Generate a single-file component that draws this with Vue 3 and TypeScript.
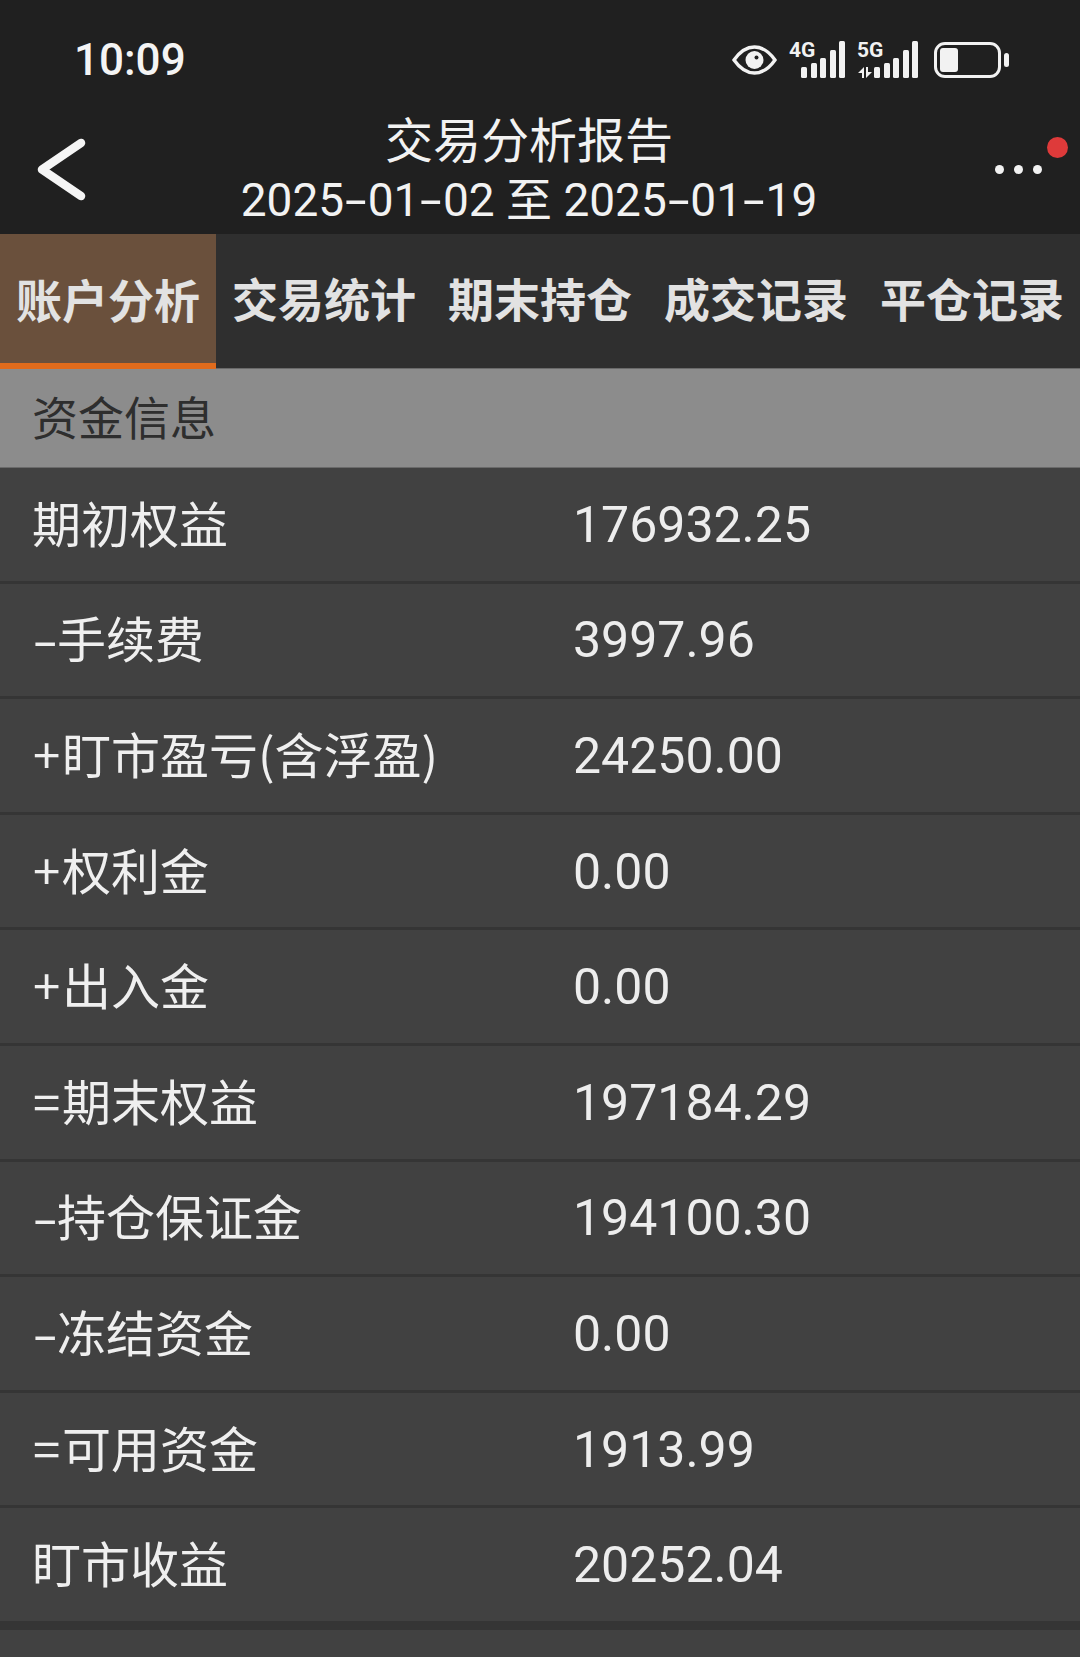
<script setup lang="ts">
const tabs = ['账户分析', '交易统计', '期末持仓', '成交记录', '平仓记录']
const rows: [string, string, string][] = [
  ['', '期初权益', '176932.25'],
  ['-', '手续费', '3997.96'],
  ['+', '盯市盈亏(含浮盈)', '24250.00'],
  ['+', '权利金', '0.00'],
  ['+', '出入金', '0.00'],
  ['=', '期末权益', '197184.29'],
  ['-', '持仓保证金', '194100.30'],
  ['-', '冻结资金', '0.00'],
  ['=', '可用资金', '1913.99'],
  ['', '盯市收益', '20252.04'],
]
const bars = [11, 15, 20, 28, 37]
</script>

<template>
  <div class="screen">
    <header class="top">
      <div class="status">
        <span class="time">10:09</span>
        <div class="status-icons">
          <svg class="eye" width="45" height="30" viewBox="0 0 45 30">
            <path d="M2 15 C9 5 16 2 22.5 2 C29 2 36 5 43 15 C36 25 29 28 22.5 28 C16 28 9 25 2 15 Z" fill="none" stroke="#f2f2f2" stroke-width="3.4" />
            <circle cx="22.5" cy="15" r="9" fill="#f2f2f2" />
            <circle cx="24.5" cy="12.5" r="2" fill="#202020" />
          </svg>
          <div class="net">
            <span class="net-label">4G</span>
            <div class="bars">
              <i v-for="h in bars" :key="h" class="bar" :style="{ height: h + 'px' }"></i>
            </div>
          </div>
          <div class="net net5">
            <span class="net-label">5G</span>
            <svg class="arrows" width="16" height="11" viewBox="0 0 16 11">
              <path d="M7 0 V11 H5 V6 H1 Z" fill="#f2f2f2" />
              <path d="M9 11 V0 H11 V5 H15 Z" fill="#f2f2f2" />
            </svg>
            <div class="bars">
              <i v-for="h in bars" :key="h" class="bar" :style="{ height: h + 'px' }"></i>
            </div>
          </div>
          <div class="battery"><div class="level"></div></div>
          <i class="cap"></i>
        </div>
      </div>
      <div class="nav">
        <svg class="back" width="50" height="66" viewBox="0 0 50 66">
          <path d="M44 6 L5 32.5 L44 59" fill="none" stroke="#f5f5f5" stroke-width="8.5" stroke-linecap="round" stroke-linejoin="round" />
        </svg>
        <div class="title">
          <div class="title-main">交易分析报告</div>
          <div class="title-sub">2025<span class="dash">-</span>01<span class="dash">-</span>02 至 2025<span class="dash">-</span>01<span class="dash">-</span>19</div>
        </div>
        <div class="more">
          <i></i><i></i><i></i>
          <span class="dot"></span>
        </div>
      </div>
    </header>
    <nav class="tabs">
      <div v-for="(t, i) in tabs" :key="t" class="tab" :class="{ active: i === 0 }">{{ t }}</div>
    </nav>
    <div class="section">资金信息</div>
    <div class="row" v-for="(r, i) in rows" :key="r[1]" :class="{ 'row-end': i === rows.length - 1 }">
      <span class="label"><span v-if="r[0]" class="op" :class="{ minus: r[0] === '-' }">{{ r[0] }}</span>{{ r[1] }}</span>
      <span class="value">{{ r[2] }}</span>
    </div>
  </div>
</template>

<style>
html, body { margin: 0; background: #414141; }
</style>

<style scoped>
.screen {
  width: 1080px;
  height: 1657px;
  overflow: hidden;
  background: #414141;
  font-family: "Noto Sans CJK SC", "Noto Sans", sans-serif;
  color: #f0f0f0;
}
.top { height: 234px; background: #202020; box-sizing: border-box; padding-top: 36px; }
.status { height: 48px; display: flex; align-items: center; justify-content: space-between; padding: 0 71px 0 74px; }
.time { font-family: Roboto, sans-serif; font-weight: 500; font-size: 44px; line-height: 48px; color: #f4f4f4; }
.status-icons { display: flex; align-items: flex-end; height: 36px; }
.eye { margin-right: 12px; margin-bottom: 3px; }
.net { position: relative; width: 56px; height: 36px; margin-right: 12px; }
.net5 { width: 61px; margin-right: 16px; }
.net-label { position: absolute; left: 0; top: -1px; font-family: Roboto, sans-serif; font-weight: 700; font-size: 21px; line-height: 18px; color: #f2f2f2; }
.bars { position: absolute; right: 0; bottom: 0; display: flex; align-items: flex-end; gap: 3.4px; }
.bar { display: block; width: 6px; background: #f2f2f2; border-radius: 1.5px; }
.arrows { position: absolute; left: 0; bottom: 0; }
.battery { box-sizing: border-box; width: 67px; height: 36px; border: 3px solid #f2f2f2; border-radius: 11px; padding: 3px; }
.level { width: 18px; height: 100%; background: #f2f2f2; border-radius: 3px; }
.cap { display: block; width: 5px; height: 14px; background: #f2f2f2; border-radius: 2.5px; margin: 0 0 11px 3px; }

.nav { position: relative; height: 150px; box-sizing: border-box; padding-top: 20px; }
.back { position: absolute; left: 37px; top: 53px; }
.title { padding-right: 22px; text-align: center; }
.title-main { font-size: 48px; line-height: 67px; font-weight: 400; color: #f2f2f2; }
.title-sub { font-size: 46px; line-height: 58px; font-family: Roboto, "Noto Sans CJK SC", sans-serif; font-weight: 400; color: #f2f2f2; }
.dash { display: inline-block; width: 23.5px; text-align: center; transform: scaleX(1.7); }
.more { position: absolute; right: 38px; top: 81px; display: flex; gap: 10px; }
.more i { display: block; width: 9px; height: 9px; border-radius: 50%; background: #f2f2f2; }
.more .dot { position: absolute; right: -26px; top: -28px; width: 21px; height: 21px; border-radius: 50%; background: #de3a3a; }

.tabs { display: flex; height: 135px; background: #2f2f2f; border-bottom: 1px solid #6a6a6a; box-sizing: border-box; }
.tab { width: 216px; display: flex; align-items: center; justify-content: center; font-size: 46px; font-weight: 700; color: #e2e2e2; box-sizing: border-box; padding-bottom: 8px; }
.tab.active { background: #6a503c; border-bottom: 6px solid #e06b1c; height: 135px; padding-bottom: 2px; }
.section { height: 99px; box-sizing: border-box; background: #8c8c8c; border-bottom: 1px solid #6a6a6a; color: #2e2e2e; font-size: 46px; display: flex; align-items: center; padding: 0 0 6px 32px; }
.row { height: 115.6px; box-sizing: border-box; display: flex; align-items: center; border-bottom: 3px solid #353535; padding-left: 32px; }
.row-end { height: 121.6px; border-bottom-width: 9px; }
.label { width: 541px; font-size: 49px; color: #efefef; padding-bottom: 6px; box-sizing: border-box; white-space: nowrap; }
.op { display: inline-block; width: 30px; padding-left: 1px; box-sizing: border-box; }
.op.minus { width: 25px; padding-left: 0; transform: scaleX(1.55); transform-origin: left center; }
.value { font-family: Roboto, sans-serif; font-size: 50px; color: #ededed; padding-top: 1px; }
</style>
